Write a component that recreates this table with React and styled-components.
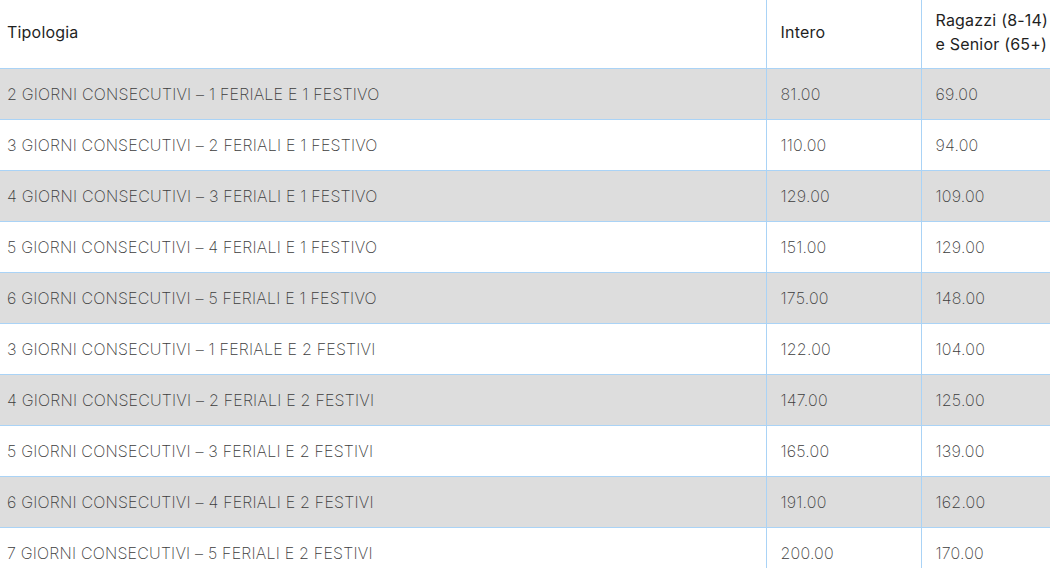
import React from "react";
import styled, { createGlobalStyle } from "styled-components";

const Global = createGlobalStyle`
  html, body { margin: 0; padding: 0; background: #fff; overflow: hidden; }
  body { font-family: Inter, "Noto Sans", sans-serif; }
`;

const Table = styled.table`
  border-collapse: collapse;
  table-layout: fixed;
  width: 1050px;
  font-family: Inter, "Noto Sans", sans-serif;
`;

const Col = styled.col`
  width: ${(p) => p.$w}px;
`;

const HeadCell = styled.th`
  height: 68px;
  box-sizing: border-box;
  padding: 0 0 4px ${(p) => (p.$first ? 7 : 14)}px;
  text-align: left;
  vertical-align: middle;
  font-size: 16px;
  font-weight: 400;
  letter-spacing: 0.2px;
  line-height: 24px;
  color: #1f1f1f;
  border-bottom: 1px solid #aad3f6;
  border-left: ${(p) => (p.$first ? "none" : "1px solid #aad3f6")};
`;

const Row = styled.tr`
  background: ${(p) => (p.$shaded ? "#dddddd" : "#ffffff")};
`;

const Cell = styled.td`
  height: 50px;
  padding: 0 0 0 ${(p) => (p.$first ? 7 : 14)}px;
  vertical-align: middle;
  font-size: 16px;
  font-weight: 250;
  letter-spacing: 0.2px;
  line-height: 24px;
  color: #3c3c3c;
  white-space: nowrap;
  border-bottom: 1px solid #aad3f6;
  border-left: ${(p) => (p.$first ? "none" : "1px solid #aad3f6")};
`;

const rows = [
  ["2 GIORNI CONSECUTIVI – 1 FERIALE E 1 FESTIVO", "81.00", "69.00"],
  ["3 GIORNI CONSECUTIVI – 2 FERIALI E 1 FESTIVO", "110.00", "94.00"],
  ["4 GIORNI CONSECUTIVI – 3 FERIALI E 1 FESTIVO", "129.00", "109.00"],
  ["5 GIORNI CONSECUTIVI – 4 FERIALI E 1 FESTIVO", "151.00", "129.00"],
  ["6 GIORNI CONSECUTIVI – 5 FERIALI E 1 FESTIVO", "175.00", "148.00"],
  ["3 GIORNI CONSECUTIVI – 1 FERIALE E 2 FESTIVI", "122.00", "104.00"],
  ["4 GIORNI CONSECUTIVI – 2 FERIALI E 2 FESTIVI", "147.00", "125.00"],
  ["5 GIORNI CONSECUTIVI – 3 FERIALI E 2 FESTIVI", "165.00", "139.00"],
  ["6 GIORNI CONSECUTIVI – 4 FERIALI E 2 FESTIVI", "191.00", "162.00"],
  ["7 GIORNI CONSECUTIVI – 5 FERIALI E 2 FESTIVI", "200.00", "170.00"],
];

export default function App() {
  return (
    <>
      <Global />
      <Table>
        <colgroup>
          <Col $w={766} />
          <Col $w={155} />
          <Col $w={129} />
        </colgroup>
        <thead>
          <tr>
            <HeadCell $first>Tipologia</HeadCell>
            <HeadCell>Intero</HeadCell>
            <HeadCell>Ragazzi (8-14) e Senior (65+)</HeadCell>
          </tr>
        </thead>
        <tbody>
          {rows.map((r, i) => (
            <Row key={i} $shaded={i % 2 === 0}>
              <Cell $first>{r[0]}</Cell>
              <Cell>{r[1]}</Cell>
              <Cell>{r[2]}</Cell>
            </Row>
          ))}
        </tbody>
      </Table>
    </>
  );
}
